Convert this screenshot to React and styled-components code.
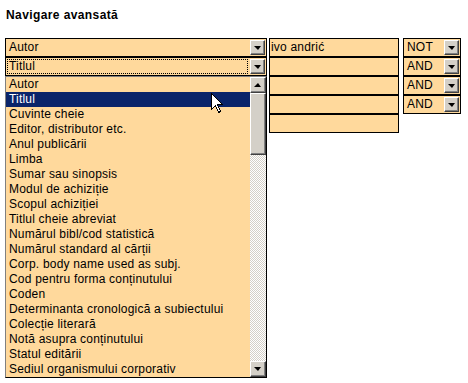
import styled, { createGlobalStyle } from "styled-components"

const GlobalStyle = createGlobalStyle`
  body {
    margin: 0;
    background: #fff;
    font-family: "Liberation Sans", Arial, sans-serif;
    font-size: 12px;
    color: #000;
  }
`

const fields = [
    "Autor",
    "Titlul",
    "Cuvinte cheie",
    "Editor, distributor etc.",
    "Anul publicării",
    "Limba",
    "Sumar sau sinopsis",
    "Modul de achiziție",
    "Scopul achiziției",
    "Titlul cheie abreviat",
    "Numărul bibl/cod statistică",
    "Numărul standard al cărții",
    "Corp. body name used as subj.",
    "Cod pentru forma conținutului",
    "Coden",
    "Determinanta cronologică a subiectului",
    "Colecție literară",
    "Notă asupra conținutului",
    "Statul editării",
    "Sediul organismului corporativ",
]

const Page = styled.div`
    position: relative;
    padding: 8px 0 0 5px;
    letter-spacing: 0.2px;
`

const Titlu = styled.div`
    font-weight: bold;
    line-height: 14px;
    padding-left: 1px;
    margin-bottom: 16px;
    letter-spacing: 0.4px;
`

const Formular = styled.div`
    display: flex;
    align-items: flex-start;
`

const Coloana = styled.div`
    display: flex;
    flex-direction: column;
    width: ${(p) => p.$latime}px;
    margin-right: ${(p) => p.$spatiu || 0}px;
`

const Select = styled.div`
    display: flex;
    align-items: center;
    height: 17px;
    border: 1px solid #000;
    background: #ffd99c;
    padding-left: 1px;
    line-height: 15px;
    width: ${(p) => p.$latime}px;
`

const TextSelect = styled.span`
    flex: 1;
    height: 15px;
    padding-left: 2px;
    outline: ${(p) => (p.$focus ? "1px dotted #000" : "none")};
    outline-offset: -1px;
    margin-right: 2px;
    white-space: nowrap;
`

const Buton = styled.div`
    width: 15px;
    height: 15px;
    box-sizing: border-box;
    margin-right: 1px;
    background: #d4d0c8;
    border-top: 1px solid #fff;
    border-left: 1px solid #fff;
    border-right: 1px solid #404040;
    border-bottom: 1px solid #404040;
    box-shadow: inset -1px -1px 0 #808080;
    display: flex;
    align-items: center;
    justify-content: center;
`

const Sageata = styled.div`
    width: 0;
    height: 0;
    border-left: 4px solid transparent;
    border-right: 3px solid transparent;
    border-${(p) => (p.$sus ? "bottom" : "top")}: 4px solid #000;
    margin-right: 1px;
`

const Lista = styled.div`
    display: flex;
    width: 260px;
    border: 1px solid #000;
    border-left-color: #808080;
    border-top-color: #808080;
    background: #ffd99c;
`

const Optiuni = styled.div`
    flex: 1;
`

const Optiune = styled.div`
    height: 15px;
    line-height: 15px;
    padding-left: 3px;
    white-space: nowrap;
    background: ${(p) => (p.$activ ? "#0a246a" : "transparent")};
    color: ${(p) => (p.$activ ? "#fff" : "#000")};
`

const Derulare = styled.div`
    width: 16px;
    display: flex;
    flex-direction: column;
`

const ButonDerulare = styled(Buton)`
    width: 16px;
    height: 16px;
    margin: 0;
`

const Cursor = styled.div`
    height: 62px;
    box-sizing: border-box;
    background: #d4d0c8;
    border-top: 1px solid #fff;
    border-left: 1px solid #fff;
    border-right: 1px solid #404040;
    border-bottom: 1px solid #404040;
    box-shadow: inset -1px -1px 0 #808080;
`

const Pista = styled.div`
    flex: 1;
    background-image: repeating-conic-gradient(#d4d0c8 0 25%, #fff 0 50%);
    background-size: 2px 2px;
`

const Camp = styled.div`
    height: 17px;
    border: 1px solid #000;
    background: #ffd99c;
    line-height: 17px;
    padding-left: 1px;
    white-space: nowrap;
`

const Mouse = styled.svg`
    position: absolute;
    left: 211px;
    top: 93px;
`

const SelectJos = ({ text, latime, focus }) => (
    <Select $latime={latime}>
        <TextSelect $focus={focus}>{text}</TextSelect>
        <Buton>
            <Sageata />
        </Buton>
    </Select>
)

const App = () => {
    return (
        <>
            <GlobalStyle />
            <Page>
                <Titlu>Navigare avansată</Titlu>
                <Formular>
                    <Coloana $latime={262} $spatiu={2}>
                        <SelectJos text="Autor" latime={259} />
                        <SelectJos text="Titlul" latime={259} focus />
                        <Lista>
                            <Optiuni>
                                {fields.map((f) => (
                                    <Optiune key={f} $activ={f === "Titlul"}>
                                        {f}
                                    </Optiune>
                                ))}
                            </Optiuni>
                            <Derulare>
                                <ButonDerulare>
                                    <Sageata $sus />
                                </ButonDerulare>
                                <Cursor />
                                <Pista />
                                <ButonDerulare>
                                    <Sageata />
                                </ButonDerulare>
                            </Derulare>
                        </Lista>
                    </Coloana>
                    <Coloana $latime={130} $spatiu={4}>
                        <Camp>ivo andrić</Camp>
                        <Camp />
                        <Camp />
                        <Camp />
                        <Camp />
                    </Coloana>
                    <Coloana $latime={57}>
                        <SelectJos text="NOT" latime={55} />
                        <SelectJos text="AND" latime={55} />
                        <SelectJos text="AND" latime={55} />
                        <SelectJos text="AND" latime={55} />
                    </Coloana>
                </Formular>
                <Mouse width="13" height="21" viewBox="0 0 13 21" shapeRendering="crispEdges">
                    <path
                        d="M0.5 0.5 L0.5 16.5 L4.5 12.5 L7.5 19.5 L9.5 18.5 L6.5 11.5 L11.5 11.5 Z"
                        fill="#fff"
                        stroke="#000"
                        strokeWidth="1"
                    />
                </Mouse>
            </Page>
        </>
    )
}

export default App
